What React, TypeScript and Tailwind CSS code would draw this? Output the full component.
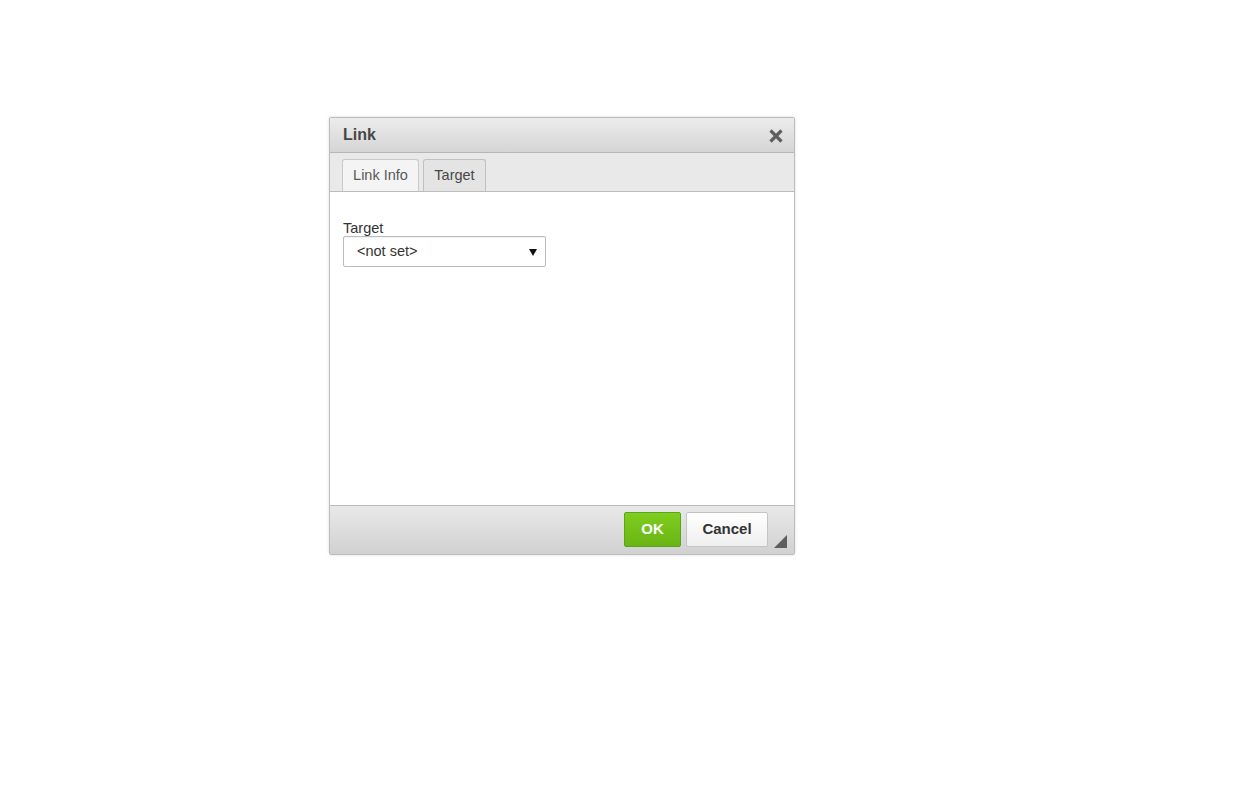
import React from "react";

export default function App() {
  return (
    <div className="min-h-[789px] w-full bg-white" style={{ fontFamily: '"Liberation Sans", Arial, sans-serif' }}>
      <div className="pl-[329px] pt-[117px]">
        <div className="w-[466px] border border-[#bcbcbc] rounded-[2px] shadow-[0_0_3px_rgba(0,0,0,0.15)] bg-white">
          {/* Title bar */}
          <div className="h-[35px] border-b border-[#b6b6b6] bg-gradient-to-b from-[#ececec] to-[#d5d5d5] flex items-center justify-between pl-[13px] pr-[10px]">
            <span className="text-[16px] font-bold text-[#474747] leading-none">Link</span>
            <svg width="16" height="16" viewBox="0 0 16 16" className="mt-[2px]">
              <path d="M2.5 2.5 L13.5 13.5 M13.5 2.5 L2.5 13.5" stroke="#5f5f5f" strokeWidth="3.2" strokeLinecap="butt" />
            </svg>
          </div>
          {/* Tabs */}
          <div className="h-[39px] bg-[#e9e9e9] border-b border-[#bcbcbc] flex items-end pl-[12px] gap-[4px]">
            <div className="h-[32px] w-[77px] border border-b-0 border-[#c9c9c9] rounded-t-[3px] bg-[#f4f4f4] flex items-center justify-center text-[14.5px] text-[#595959]">
              Link Info
            </div>
            <div className="h-[32px] w-[63px] border border-b-0 border-[#c0c0c0] rounded-t-[3px] bg-[#e4e4e4] flex items-center justify-center text-[14.5px] text-[#474747]">
              Target
            </div>
          </div>
          {/* Body */}
          <div className="h-[314px] border-b border-[#bcbcbc] px-[13px] pt-[28px]">
            <div className="text-[14.5px] text-[#333] leading-[16px]">Target</div>
            <div className="w-[203px] h-[31px] border border-[#bcbcbc] rounded-[2px] bg-white flex items-center justify-between pl-[13px] pr-[8px] shadow-[inset_0_1px_1px_rgba(0,0,0,0.05)]">
              <span className="text-[14.5px] text-[#333]">&lt;not set&gt;</span>
              <svg width="8" height="8" viewBox="0 0 8 8">
                <path d="M0 1 L8 1 L4 8 Z" fill="#111" />
              </svg>
            </div>
          </div>
          {/* Footer */}
          <div className="h-[48px] bg-gradient-to-b from-[#e9e9e9] to-[#d1d1d1] flex items-start justify-end pr-[26px] pt-[6px] gap-[5px] relative">
            <div className="w-[57px] h-[35px] rounded-[2px] border border-[#5aa51c] bg-gradient-to-b from-[#7fcd1e] to-[#6ab515] flex items-center justify-center text-white font-bold text-[15px]">
              OK
            </div>
            <div className="w-[82px] h-[35px] rounded-[2px] border border-[#c4c4c4] bg-gradient-to-b from-[#ffffff] to-[#efefef] flex items-center justify-center text-[#333] font-bold text-[15px]">
              Cancel
            </div>
            <svg width="13" height="13" viewBox="0 0 13 13" className="absolute right-[7px] bottom-[6px]">
              <path d="M13 0 L13 13 L0 13 Z" fill="#5e5e5e" />
            </svg>
          </div>
        </div>
      </div>
    </div>
  );
}
